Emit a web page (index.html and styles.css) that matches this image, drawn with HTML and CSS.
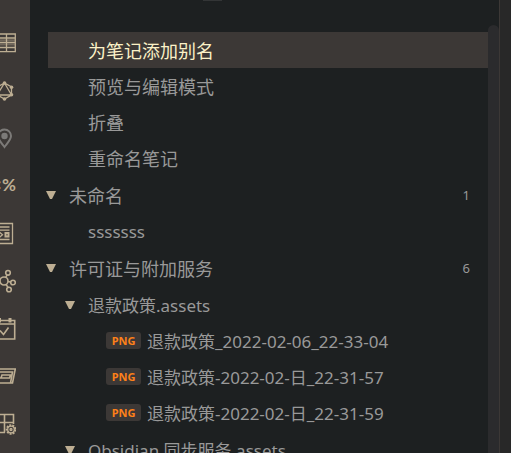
FILE: index.html
```
<!DOCTYPE html>
<html lang="zh-CN">
<head>
<meta charset="utf-8">
<title>Obsidian</title>
<link rel="stylesheet" href="styles.css">
</head>
<body>
<div class="app">
  <nav class="ribbon">
    <button class="tool" aria-label="表格"><svg viewBox="-8 0 24 24"><path class="band" d="M-8 10.3H15M-8 14.5H15"/><path d="M-8 4H15.300V21.700H-8M-8 8H15M-8 12.500H15M-8 17.500H15M6.500 4V21"/></svg></button>
    <button class="tool" aria-label="关系图谱"><svg viewBox="-8 0 24 24"><path d="M4.500 5L11.500 9V17L4.500 21L-3 17V9ZM4.500 5L11.500 17H-3Z"/><g class="solid"><circle cx="4.500" cy="5" r="1.800"/><circle cx="11.500" cy="9.300" r="1.800"/><circle cx="11.500" cy="16.700" r="1.800"/><circle cx="4.500" cy="21" r="1.800"/></g></svg></button>
    <button class="tool muted" aria-label="地图"><svg viewBox="-8 0 24 24"><path class="heavy" d="M4.500 21C1.500 17-2 13.500-2 10A6.500 6.500 0 0 1 11 10C11 13.500 7.500 17 4.500 21Z"/><circle class="solid" cx="4.500" cy="10" r="3.200"/></svg></button>
    <button class="tool code" aria-label="模板">&lt;%</button>
    <button class="tool" aria-label="卡片"><svg viewBox="-8 0 24 24"><path d="M-8 2.500H12.500V22.500H-8M-8 6H9.500M-8 9.200H9.500M-8 18.500H9.500M-1 10.800L2.500 13.800L-1 16.800"/><path class="heavy" d="M5.500 12H8.500V15.500H5.500Z"/></svg></button>
    <button class="tool" aria-label="节点"><svg viewBox="-8 0 24 24"><g class="bold"><circle cx="4" cy="12" r="4"/><circle cx="8" cy="3.800" r="2.300"/><circle cx="13" cy="13.500" r="2.300"/><circle cx="9" cy="20.500" r="2.300"/><path d="M5.800 8.500L7 6M8 12.500L10.500 13M6 15.500L8 18.200M0 12L-3 13"/></g></svg></button>
    <button class="tool" aria-label="日历"><svg viewBox="-8 0 24 24"><path class="bold" d="M-8 3.500H14.700V22H-8M-8 7H14.500M0 13.500L3.500 17.500L8.500 10.500"/><path class="solid" d="M8.500 1H11.500V5.500H8.500ZM-2 1H1V5.500H-2Z"/></svg></button>
    <button class="tool" aria-label="打开文件夹"><svg viewBox="-8 0 24 24"><path class="bold" d="M-8 5H15.300L12.500 19H-8M-8 8H12.500L10.500 19M-8 14H1L2 11H10.500L9.500 14H-8"/></svg></button>
    <button class="tool" aria-label="表格设置"><svg viewBox="-8 0 24 24"><path class="bold" d="M-8 2.500H13.500V12M-8 10.500H13M4.500 2.500V20.500M-8 20.500H5"/><circle class="cog" cx="11" cy="17.500" r="4.300"/><circle cx="11" cy="17.500" r="3.300"/><circle cx="11" cy="17.500" r="1"/></svg></button>
  </nav>
  <main class="explorer">
    <div class="handle"></div>
    <div class="tree">
      <a class="row level-2 active" href="#">为笔记添加别名</a>
      <a class="row level-2" href="#">预览与编辑模式</a>
      <a class="row level-2" href="#">折叠</a>
      <a class="row level-2" href="#">重命名笔记</a>
      <button class="row level-1 folder"><svg class="arrow" viewBox="0 0 10 8"><path d="M0 0H10L6 8H4Z"/></svg><span>未命名</span><span class="count">1</span></button>
      <a class="row level-2 mixed" href="#">sssssss</a>
      <button class="row level-1 folder"><svg class="arrow" viewBox="0 0 10 8"><path d="M0 0H10L6 8H4Z"/></svg><span>许可证与附加服务</span><span class="count">6</span></button>
      <button class="row level-2 folder mixed"><svg class="arrow" viewBox="0 0 10 8"><path d="M0 0H10L6 8H4Z"/></svg><span>退款政策.assets</span></button>
      <a class="row level-3 mixed" href="#"><span class="tag">PNG</span>退款政策_2022-02-06_22-33-04</a>
      <a class="row level-3 mixed" href="#"><span class="tag">PNG</span>退款政策-2022-02-日_22-31-57</a>
      <a class="row level-3 mixed" href="#"><span class="tag">PNG</span>退款政策-2022-02-日_22-31-59</a>
      <button class="row level-2 folder mixed"><svg class="arrow" viewBox="0 0 10 8"><path d="M0 0H10L6 8H4Z"/></svg><span>Obsidian 同步服务.assets</span></button>
    </div>
  </main>
  <div class="scrollbar"><div class="thumb"></div></div>
  <aside class="editor"></aside>
</div>
</body>
</html>
```
FILE: styles.css
```
* {
  box-sizing: border-box;
}

body {
  margin: 0;
  background: #1d2021;
  color: #999;
  font-family: "Noto Sans", "Noto Sans CJK SC", sans-serif;
}

button {
  padding: 0;
  border: 0;
  background: none;
  color: inherit;
  font: inherit;
  text-align: left;
}

.app {
  display: flex;
  height: 100vh;
  overflow: hidden;
}

.ribbon {
  display: flex;
  flex: 0 0 30px;
  flex-direction: column;
  justify-content: space-between;
  padding: 30px 0 17px;
  background: #3c3836;
  overflow: hidden;
}

.tool {
  width: 24px;
  height: 24px;
  margin-left: -8px;
  color: #bdae93;
}

.tool svg {
  display: block;
  width: 24px;
  height: 24px;
  fill: none;
  stroke: currentColor;
  stroke-width: 1.3;
}

.tool .solid {
  fill: currentColor;
  stroke: none;
}

.tool .bold {
  stroke-width: 1.6;
}

.tool .heavy {
  stroke-width: 2;
}

.tool .band {
  stroke-width: 2;
  opacity: 0.4;
}

.tool .cog {
  fill: #3c3836;
  stroke-width: 2;
  stroke-dasharray: 2 1;
}

.tool.muted {
  color: #7c7a78;
}

.tool.code {
  display: flex;
  justify-content: flex-end;
  font: 700 17px/24px Lato, sans-serif;
}

.explorer {
  flex: 1;
  min-width: 0;
  padding-left: 18px;
}

.handle {
  width: 19px;
  height: 1px;
  margin: 0 auto 31px 155px;
  background: #333536;
}

.tree {
  display: flex;
  flex-direction: column;
}

.row {
  display: flex;
  flex: none;
  align-items: center;
  height: 36px;
  padding-top: 2px;
  padding-right: 18px;
  font-size: 18px;
  line-height: 34px;
  color: inherit;
  text-decoration: none;
  white-space: nowrap;
}

.mixed {
  font-size: 17px;
}

.active {
  background: #3c3836;
  color: #fbf1c7;
}

.folder {
  margin-top: 1px;
}

.level-1 {
  padding-left: 21px;
}

.level-2 {
  padding-left: 40px;
}

.level-3 {
  padding-left: 58px;
}

.arrow {
  flex: none;
  width: 10px;
  height: 8px;
  margin-right: 13px;
  margin-bottom: 2px;
  margin-left: -23px;
  fill: #bdae93;
}

.count {
  margin-bottom: 2px;
  margin-left: auto;
  font-size: 13px;
}

.tag {
  width: 35px;
  height: 17px;
  margin-right: 6px;
  margin-bottom: 3px;
  border-radius: 3px;
  background: #3c3836;
  color: #fe8019;
  font-size: 11px;
  font-weight: 700;
  line-height: 17px;
  text-align: center;
}

.scrollbar {
  flex: 0 0 11px;
  padding-top: 25px;
}

.thumb {
  height: 100%;
  border-radius: 6px 6px 0 0;
  background: #2b2b2d;
}

.editor {
  flex: 0 0 12px;
  border-left: 1px solid #3c3836;
  background: #282828;
}
```
